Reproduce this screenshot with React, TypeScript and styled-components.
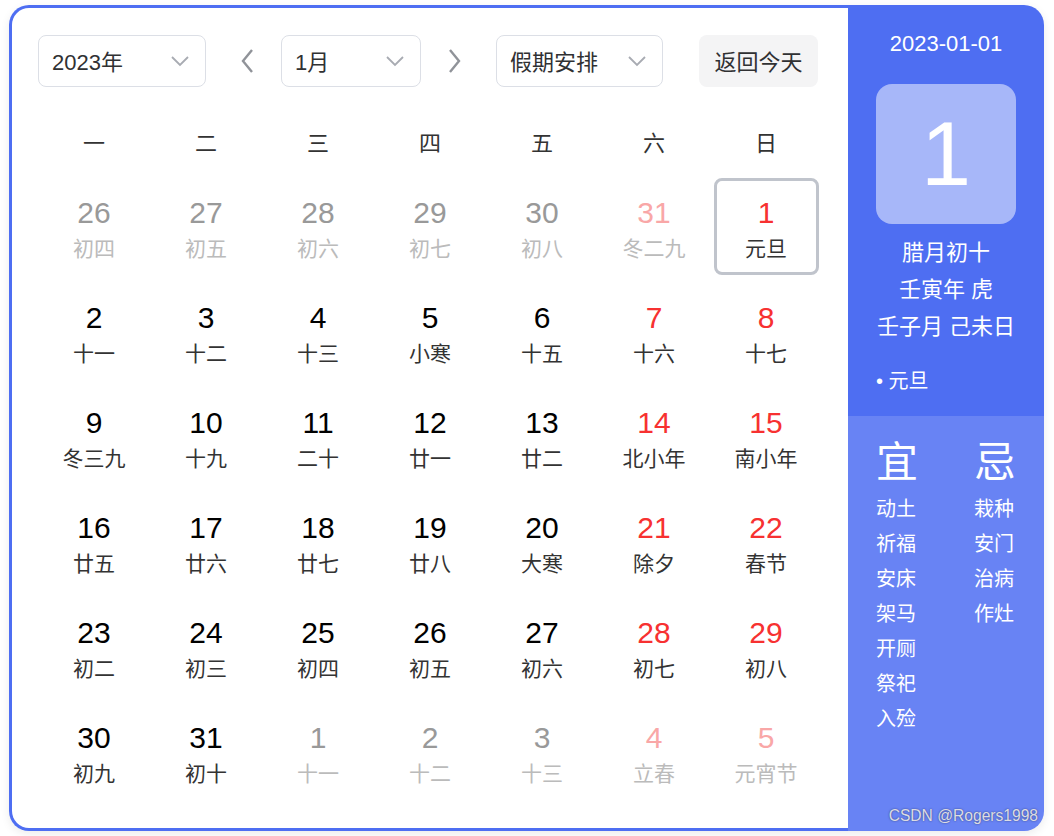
import styled, { createGlobalStyle } from 'styled-components';

const GlobalStyle = createGlobalStyle`
  body {
    margin: 0;
    background: #fff;
    font-family: "Liberation Sans", "Noto Sans CJK SC", sans-serif;
  }
`;

type Day = { n: number; lunar: string; other?: boolean; weekend?: boolean; selected?: boolean };

const WEEK = ['一', '二', '三', '四', '五', '六', '日'];

const ROWS: [number, string][][] = [
  [[26, '初四'], [27, '初五'], [28, '初六'], [29, '初七'], [30, '初八'], [31, '冬二九'], [1, '元旦']],
  [[2, '十一'], [3, '十二'], [4, '十三'], [5, '小寒'], [6, '十五'], [7, '十六'], [8, '十七']],
  [[9, '冬三九'], [10, '十九'], [11, '二十'], [12, '廿一'], [13, '廿二'], [14, '北小年'], [15, '南小年']],
  [[16, '廿五'], [17, '廿六'], [18, '廿七'], [19, '廿八'], [20, '大寒'], [21, '除夕'], [22, '春节']],
  [[23, '初二'], [24, '初三'], [25, '初四'], [26, '初五'], [27, '初六'], [28, '初七'], [29, '初八']],
  [[30, '初九'], [31, '初十'], [1, '十一'], [2, '十二'], [3, '十三'], [4, '立春'], [5, '元宵节']],
];

const DAYS: Day[] = ROWS.flatMap((row, r) =>
  row.map(([n, lunar], c) => ({
    n,
    lunar,
    weekend: c >= 5,
    other: (r === 0 && c < 6) || (r === 5 && c >= 2),
    selected: r === 0 && c === 6,
  }))
);

const GOOD = ['动土', '祈福', '安床', '架马', '开厕', '祭祀', '入殓'];
const BAD = ['栽种', '安门', '治病', '作灶'];

const Chevron = () => (
  <svg width="22" height="22" viewBox="0 0 22 22">
    <polyline points="3,7 11,15 19,7" fill="none" stroke="#a8abb2" strokeWidth="1.8" />
  </svg>
);

export default function App() {
  return (
    <>
      <GlobalStyle />
      <Page>
        <Card>
          <Main>
            <Toolbar>
              <Select $w={168}>
                <span>2023年</span>
                <Chevron />
              </Select>
              <Arrow $ml={26} $mr={19}>
                <svg width="30" height="30" viewBox="0 0 30 30">
                  <polyline points="20,4 11,15 20,26" fill="none" stroke="#909399" strokeWidth="2.4" />
                </svg>
              </Arrow>
              <Select $w={140}>
                <span>1月</span>
                <Chevron />
              </Select>
              <Arrow $ml={19} $mr={26}>
                <svg width="30" height="30" viewBox="0 0 30 30">
                  <polyline points="10,4 19,15 10,26" fill="none" stroke="#909399" strokeWidth="2.4" />
                </svg>
              </Arrow>
              <Select $w={167}>
                <span>假期安排</span>
                <Chevron />
              </Select>
              <TodayButton>返回今天</TodayButton>
            </Toolbar>
            <WeekRow>
              {WEEK.map((w) => (
                <WeekCell key={w}>{w}</WeekCell>
              ))}
            </WeekRow>
            <Grid>
              {DAYS.map((d, i) => (
                <Cell key={i} $selected={d.selected}>
                  <Num $other={d.other} $weekend={d.weekend}>{d.n}</Num>
                  <Lunar $other={d.other}>{d.lunar}</Lunar>
                </Cell>
              ))}
            </Grid>
          </Main>
          <Side>
            <SideTop>
              <DateText>2023-01-01</DateText>
              <BigDay>1</BigDay>
              <LunarInfo>
                <div>腊月初十</div>
                <div>壬寅年 虎</div>
                <div>壬子月 己未日</div>
              </LunarInfo>
              <Festival>• 元旦</Festival>
            </SideTop>
            <SideBottom>
              <AlmanacCol>
                <AlmanacHead>宜</AlmanacHead>
                {GOOD.map((g) => (
                  <AlmanacItem key={g}>{g}</AlmanacItem>
                ))}
              </AlmanacCol>
              <AlmanacCol>
                <AlmanacHead>忌</AlmanacHead>
                {BAD.map((g) => (
                  <AlmanacItem key={g}>{g}</AlmanacItem>
                ))}
              </AlmanacCol>
              <Watermark>CSDN @Rogers1998</Watermark>
            </SideBottom>
          </Side>
        </Card>
      </Page>
    </>
  );
}

const Page = styled.div`
  padding: 5px 10px 5px 9px;
`;

const Card = styled.div`
  display: flex;
  width: 1035px;
  height: 826px;
  box-shadow: 0 3px 10px rgba(0, 0, 0, 0.08);
  border-radius: 20px;
`;

const Main = styled.div`
  box-sizing: border-box;
  width: 839px;
  border: 3px solid #4e6ef2;
  border-right: none;
  border-radius: 20px 0 0 20px;
  background: #fff;
  padding: 27px 26px 0 26px;
`;

const Toolbar = styled.div`
  display: flex;
  align-items: center;
  height: 52px;
`;

const Select = styled.div<{ $w: number }>`
  box-sizing: border-box;
  width: ${(p) => p.$w}px;
  height: 52px;
  border: 1px solid #dcdfe6;
  border-radius: 8px;
  display: flex;
  align-items: center;
  justify-content: space-between;
  padding: 0 14px 3px 13px;
  font-size: 22px;
  color: #303133;
  svg {
    display: block;
    margin-top: 3px;
  }
`;

const Arrow = styled.div<{ $ml: number; $mr: number }>`
  width: 30px;
  height: 30px;
  margin: 0 ${(p) => p.$mr}px 0 ${(p) => p.$ml}px;
  svg {
    display: block;
  }
`;

const TodayButton = styled.div`
  margin-left: 36px;
  width: 119px;
  height: 52px;
  box-sizing: border-box;
  padding-bottom: 3px;
  border-radius: 8px;
  background: #f4f4f5;
  display: flex;
  align-items: center;
  justify-content: center;
  font-size: 22px;
  color: #303133;
`;

const WeekRow = styled.div`
  display: grid;
  grid-template-columns: repeat(7, 112px);
  margin-top: 34px;
  height: 40px;
  align-items: center;
`;

const WeekCell = styled.div`
  text-align: center;
  font-size: 22px;
  color: #333;
`;

const Grid = styled.div`
  display: grid;
  grid-template-columns: repeat(7, 112px);
  grid-auto-rows: 97px;
  row-gap: 8px;
  margin-top: 17px;
`;

const Cell = styled.div<{ $selected?: boolean }>`
  box-sizing: border-box;
  justify-self: center;
  width: 105px;
  border: 3px solid ${(p) => (p.$selected ? '#c0c4cc' : 'transparent')};
  border-radius: 8px;
  padding-top: 15px;
  display: flex;
  flex-direction: column;
  align-items: center;
`;

const Num = styled.div<{ $other?: boolean; $weekend?: boolean }>`
  font-size: 30px;
  line-height: 34px;
  color: ${(p) =>
    p.$weekend ? (p.$other ? '#f9a7a7' : '#f73131') : p.$other ? '#999' : '#000'};
`;

const Lunar = styled.div<{ $other?: boolean }>`
  font-size: 21px;
  line-height: 37px;
  color: ${(p) => (p.$other ? '#bbb' : '#333')};
`;

const Side = styled.div`
  position: relative;
  width: 196px;
  display: flex;
  flex-direction: column;
  border-radius: 0 20px 20px 0;
  overflow: hidden;
  background: #4e6ef2;
  color: #fff;
`;

const SideTop = styled.div`
  height: 411px;
  display: flex;
  flex-direction: column;
  align-items: center;
  padding-top: 25px;
  box-sizing: border-box;
`;

const DateText = styled.div`
  font-size: 22px;
  line-height: 28px;
`;

const BigDay = styled.div`
  margin-top: 26px;
  width: 140px;
  height: 140px;
  border-radius: 16px;
  background: rgba(255, 255, 255, 0.5);
  display: flex;
  align-items: center;
  justify-content: center;
  font-size: 90px;
`;

const LunarInfo = styled.div`
  margin-top: 10px;
  text-align: center;
  font-size: 22px;
  line-height: 37px;
`;

const Festival = styled.div`
  align-self: flex-start;
  margin: 23px 0 0 28px;
  font-size: 20px;
  line-height: 26px;
`;

const SideBottom = styled.div`
  flex: 1;
  display: flex;
  gap: 56px;
  padding: 22px 0 0 28px;
  background: rgba(255, 255, 255, 0.15);
`;

const AlmanacCol = styled.div`
  display: flex;
  flex-direction: column;
`;

const AlmanacHead = styled.div`
  font-size: 42px;
  line-height: 50px;
  margin-bottom: 4px;
`;

const AlmanacItem = styled.div`
  font-size: 20px;
  line-height: 35px;
`;

const Watermark = styled.div`
  position: absolute;
  right: 6px;
  bottom: 6px;
  font-size: 15.6px;
  color: #dcdce4;
  text-shadow: 0 0 2px rgba(0, 0, 0, 0.5);
`;
